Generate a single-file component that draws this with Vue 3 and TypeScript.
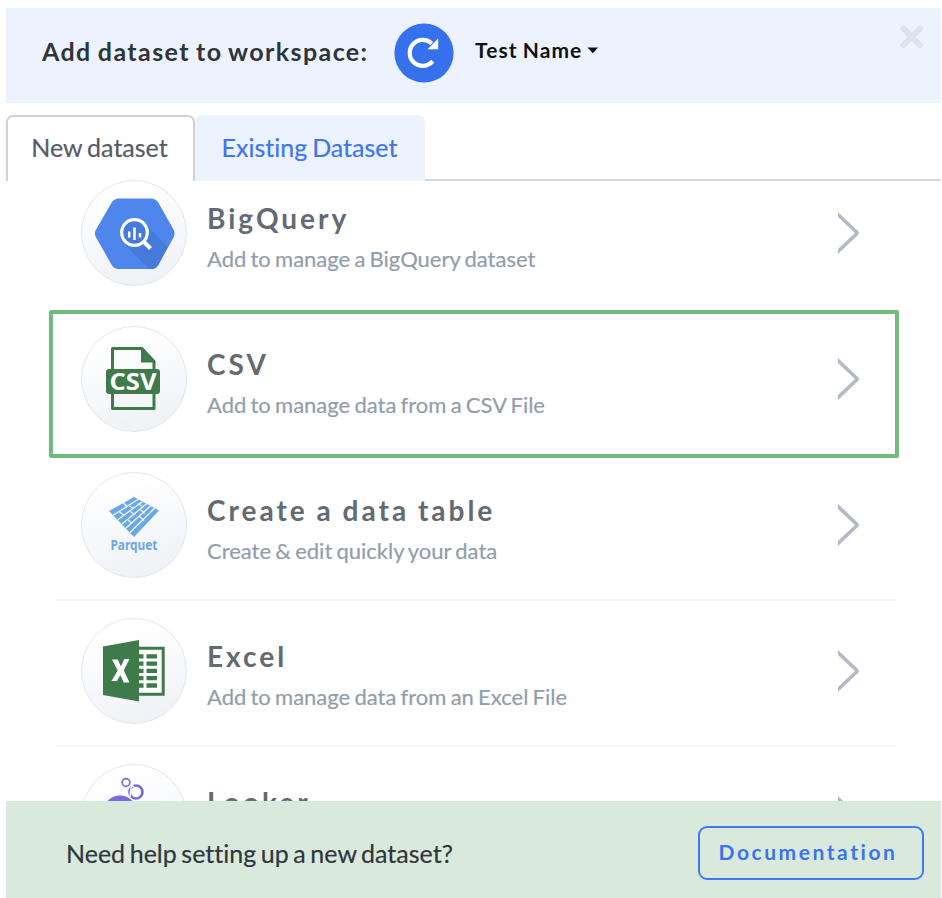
<script setup lang="ts">
interface Source {
  id: 'bigquery' | 'csv' | 'table' | 'excel' | 'looker'
  title: string
  description: string
  highlighted?: boolean
}

const sources: Source[] = [
  { id: 'bigquery', title: 'BigQuery', description: 'Add to manage a BigQuery dataset' },
  { id: 'csv', title: 'CSV', description: 'Add to manage data from a CSV File', highlighted: true },
  { id: 'table', title: 'Create a data table', description: 'Create & edit quickly your data' },
  { id: 'excel', title: 'Excel', description: 'Add to manage data from an Excel File' },
  { id: 'looker', title: 'Looker', description: '' },
]
</script>

<template>
  <main class="dialog">
    <header class="header">
      <h1 class="heading">Add dataset to workspace:</h1>
      <span class="badge">
        <svg width="60" height="60" viewBox="0 0 60 60">
          <circle cx="30" cy="30" r="29.6" fill="#3570ed" />
          <path d="M38.700 38.200A13 13 0 1 1 37.800 20.600" fill="none" stroke="#fff" stroke-width="4.200" />
          <path d="M44.200 15.500V26.200H33.500Z" fill="#fff" />
        </svg>
      </span>
      <button class="workspace">
        <span>Test Name</span>
        <svg class="caret" width="12" height="7" viewBox="0 0 12 7"><path d="M.5.5h10.6L5.8 6.2Z" fill="#111" /></svg>
      </button>
      <button class="close" aria-label="Close">
        <svg width="26" height="26" viewBox="0 0 26 26"><path d="M4.5 4.5 21 21M21 4.5 4.5 21" stroke="#dde2ec" stroke-width="6" stroke-linecap="round" /></svg>
      </button>
    </header>

    <nav class="tabs">
      <button class="tab active">New dataset</button>
      <button class="tab">Existing Dataset</button>
      <span class="rule"></span>
    </nav>

    <section class="list">
      <article v-for="s in sources" :key="s.id" class="row" :class="{ highlighted: s.highlighted }">
        <span class="icon">
          <svg v-if="s.id === 'bigquery'" width="106" height="106" viewBox="0 0 106 106">
            <path d="M36 18.500H70Q74.500 18.500 77 22L92.800 50Q94.300 53.500 92.800 57L77 85.500Q74.500 89 70 89H38Q33.500 89 31 85.500L14.800 57Q13 53.500 14.800 50L31 22Q33.500 18.500 38 18.500Z" fill="#4f86ec" />
            <path d="M64 43.500 86.500 67 77 85.500Q74.500 89 70 89H68L44 65Z" fill="#477bda" />
            <circle cx="53.500" cy="52.500" r="12.800" fill="#477bda" stroke="#fff" stroke-width="3.200" />
            <path d="M62.500 61.500 69.500 68.500" stroke="#fff" stroke-width="4" />
            <path d="M48.200 51.500v6M53.500 47.500v12.500M59 53v4.500" stroke="#fff" stroke-width="2.500" />
          </svg>
          <svg v-else-if="s.id === 'csv'" width="106" height="106" viewBox="0 0 106 106">
            <path d="M31.500 22.500H61L73 35.500V82.500H31.500Z" fill="none" stroke="#3f7a4b" stroke-width="3" stroke-linejoin="round" />
            <path d="M60 21.500 74.500 36.500H60Z" fill="#3f7a4b" />
            <rect x="25" y="43" width="54" height="25" rx="3" fill="#3f7a4b" />
            <text x="52" y="64" class="csv-text" textLength="47" lengthAdjust="spacingAndGlyphs">CSV</text>
          </svg>
          <svg v-else-if="s.id === 'table'" width="106" height="106" viewBox="0 0 106 106">
            <path d="M53 25 78 38.500 53 65 28 39Z" fill="#68a8e8" />
            <g fill="none" stroke="#f9fafc" stroke-width="1.200">
              <path d="M32.200 43.300 57.200 27.200M36.800 47.700 61.500 29.500M41 52 65.500 31.800M45 56 69.500 34M49 60.500 73.500 36.200" />
              <path d="M42 30.500 46 34.500M48.500 34 52.500 36.500M38.500 39.700 42.800 43.400M57 31.500 60.800 34.300M49.500 39.500 54 43M59.500 37.500 63.500 41.500M47 48 51 51.500M58.500 44.500 63 48.500" />
            </g>
            <text x="53" y="78" class="parquet-text" textLength="47" lengthAdjust="spacingAndGlyphs">Parquet</text>
          </svg>
          <svg v-else-if="s.id === 'excel'" width="106" height="106" viewBox="0 0 106 106">
            <path d="M56 30.200H82.200V76.200H56Z" fill="#fff" stroke="#3f7a4b" stroke-width="3" />
            <path d="M22 28.500 58 22V83.500L22 77Z" fill="#3f7a4b" />
            <path d="M58 38.300h4.500M58 45.600h4.500M58 52.900h4.500M58 60.200h4.500M58 67.500h4.500M65.500 38.300H76M65.500 45.600H76M65.500 52.900H76M65.500 60.200H76M65.500 67.500H76" stroke="#3f7a4b" stroke-width="4.300" />
            <path d="M31 41.500h5.700L40 48.500 43.300 41H48.500L42.800 52.500 48.500 64.500H42.700L39.300 57 36 63H30.500L36.700 52.500Z" fill="#fff" />
          </svg>
          <svg v-else width="106" height="106" viewBox="0 0 106 106">
            <circle cx="45" cy="18.500" r="3.900" fill="none" stroke="#7e69d9" stroke-width="1.700" />
            <circle cx="55" cy="28" r="6.500" fill="none" stroke="#7e69d9" stroke-width="2.700" />
            <path d="M50 20 53.500 24M50.500 21 48.500 36" stroke="#fbfcfd" stroke-width="1.500" />
            <circle cx="39" cy="48.500" r="13.500" fill="none" stroke="#7e69d9" stroke-width="7" />
          </svg>
        </span>
        <div class="copy">
          <h2 class="title">{{ s.title }}</h2>
          <p class="description">{{ s.description }}</p>
        </div>
        <svg class="chevron" width="22" height="44" viewBox="0 0 22 44"><path d="M-1 2.500 19.500 22-1 41.500" fill="none" stroke="#b1bac5" stroke-width="3.600" stroke-linejoin="bevel" /></svg>
      </article>
    </section>

    <footer class="footer">
      <p class="help">Need help setting up a new dataset?</p>
      <button class="documentation">Documentation</button>
    </footer>
  </main>
</template>

<style>
body { background: #fff; overflow: hidden; }
</style>

<style scoped>
* { box-sizing: border-box; }
h1, h2, p { margin: 0; }
button { appearance: none; border: 0; padding: 0; background: none; font: inherit; color: inherit; cursor: pointer; }
svg { display: block; flex: none; }
.dialog { height: 898px; padding: 8px 1px 0 6px; display: flex; flex-direction: column; overflow: hidden; font-family: Lato, "Liberation Sans", sans-serif; font-variant-ligatures: none; background: #fff; }
.header { height: 95px; flex: none; display: flex; align-items: flex-start; padding-left: 36px; background: #ecf3fe; }
.heading { width: 352px; padding-top: 28px; font-size: 25px; line-height: 30px; font-weight: 700; letter-spacing: 1.4px; word-spacing: -1.3px; color: #2f343b; white-space: nowrap; }
.badge { margin-top: 15px; }
.workspace { display: flex; align-items: center; gap: 5px; margin: 29px 0 0 21px; font-size: 21px; line-height: 26px; font-weight: 700; letter-spacing: 1.1px; word-spacing: -1.3px; color: #111; white-space: nowrap; }
.close { margin: 16px 16px 0 auto; }
.tabs { height: 78px; flex: none; display: flex; padding-top: 12px; }
.tab { width: 230px; height: 66px; padding: 0 1px 2px 0; border-radius: 7px 7px 0 0; background: #ecf3fe; color: #3d76f0; font-size: 25px; line-height: 30px; word-spacing: -1.5px; white-space: nowrap; -webkit-text-stroke: 0.2px currentColor; }
.tab.active { width: 189px; padding: 0 2px 4px 0; border: 2px solid #ced1da; border-bottom: 0; background: #fff; color: #555b67; }
.rule { flex: 1; border-bottom: 2px solid #d5d8e0; height: 66px; }
.list { flex: 1; min-height: 0; overflow: hidden; padding: 0 44px 0 49px; margin-top: -1px; }
.row { height: 146px; display: flex; align-items: flex-start; padding: 17px 37px 0 26px; border-bottom: 2px solid #f5f6fa; }
.row:first-child { height: 130px; padding-top: 0; border-color: transparent; }
.row.highlighted { height: 148px; margin: 0 -2px 0 -6px; padding: 12px 35px 0 28px; border: 4px solid #70bd7b; border-radius: 2px; }
.row.highlighted + .row { height: 143px; padding-top: 14px; }
.icon { flex: none; width: 106px; height: 106px; border: 1px solid #e4e7eb; border-radius: 50%; background: linear-gradient(165deg, #fff 15%, #edf0f6); overflow: hidden; }
.icon svg { margin: -1px; }
.copy { flex: 1; padding: 20px 0 0 20px; white-space: nowrap; }
.title { font-size: 28px; line-height: 36px; font-weight: 700; letter-spacing: 3px; word-spacing: -1px; color: #626a73; }
.description { margin-top: 9px; font-size: 22px; line-height: 28px; word-spacing: -1.4px; color: #929dac; -webkit-text-stroke: 0.2px currentColor; }
.chevron { margin-top: 31px; }
.csv-text { fill: #fff; font: 700 24px "Open Sans", sans-serif; text-anchor: middle; }
.parquet-text { fill: #68a8e8; font: 700 14px "Noto Sans", sans-serif; text-anchor: middle; }
.footer { height: 97px; flex: none; display: flex; align-items: flex-start; justify-content: space-between; padding: 25px 17px 0 60px; background: #d9eadd; }
.help { padding-top: 12px; font-size: 25px; line-height: 30px; word-spacing: -1.8px; color: #30363d; white-space: nowrap; -webkit-text-stroke: 0.2px currentColor; }
.documentation { width: 226px; height: 54px; padding: 0 3px 3px 0; border: 2px solid #4079ed; border-radius: 9px; color: #3974ed; font-size: 21px; font-weight: 700; letter-spacing: 2.55px; text-indent: -3px; }
</style>
